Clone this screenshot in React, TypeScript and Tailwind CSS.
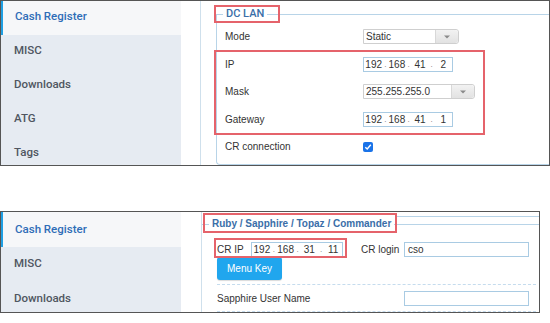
import React from "react";

const label = "font-['Liberation_Sans',Arial,sans-serif] text-[10px] text-[#333]";

function Sidebar({ items, itemH, pb }: { items: string[]; itemH: string; pb: string }) {
  return (
    <div className="w-[180px] shrink-0 h-full bg-[#e6ebf2] overflow-hidden font-['Roboto',sans-serif] text-[11.5px] font-medium">
      {items.map((t, i) =>
        i === 0 ? (
          <div key={t} className={`${itemH} ${pb} flex items-center bg-[#f6f7f9] border-l-2 border-[#1f9fe3] pl-[12px] text-[#2f6db7]`}>
            {t}
          </div>
        ) : (
          <div key={t} className={`${itemH} ${pb} flex items-center pl-[13px] text-[#4f5661]`}>
            {t}
          </div>
        )
      )}
    </div>
  );
}

function Caret() {
  return (
    <svg width="6" height="4" viewBox="0 0 6 4">
      <path d="M0 0.5 L6 0.5 L3 3.5 Z" fill="#8a8a8a" />
    </svg>
  );
}

function Select({ text, w }: { text: string; w: string }) {
  return (
    <div className={`${w} h-[15px] flex border border-[#cfcfcf] rounded-r-[3px] bg-white`}>
      <div className={`flex-1 flex items-center pl-[2px] ${label}`}>{text}</div>
      <div className="w-[23px] h-full flex items-center justify-center bg-gradient-to-b from-[#f2f2f2] to-[#e2e2e2] border-l border-[#d8d8d8] rounded-r-[3px]">
        <Caret />
      </div>
    </div>
  );
}

function IpInput({ parts, w }: { parts: string[]; w: string }) {
  return (
    <div className={`${w} h-[15px] flex items-center border border-[#a9cbe3] bg-white pl-[1px] ${label} text-[10.5px]`}>
      {parts.map((p, i) => (
        <React.Fragment key={i}>
          <span className="w-[18px] text-center">{p}</span>
          {i < 3 && <span className="w-[6px] text-center text-[#777] text-[8px] translate-y-[1px]">.</span>}
        </React.Fragment>
      ))}
    </div>
  );
}

function Row({ name, children }: { name: string; children: React.ReactNode }) {
  return (
    <div className="h-[27.5px] flex items-center pl-[8px]">
      <div className={`w-[138px] ${label}`}>{name}</div>
      {children}
    </div>
  );
}

function Check() {
  return (
    <div className="w-[10px] h-[10px] rounded-[2px] bg-[#1a73e8] flex items-center justify-center">
      <svg width="8" height="8" viewBox="0 0 8 8">
        <path d="M1.3 4.2 L3.2 6 L6.8 1.8" stroke="white" strokeWidth="1.4" fill="none" />
      </svg>
    </div>
  );
}

const redBox = "absolute border-2 border-[#e5636b] pointer-events-none";

export default function App() {
  return (
    <div className="w-[550px] h-[323px] bg-white overflow-hidden">
      {/* Top panel */}
      <div className="w-[550px] h-[166px] border border-[#555] flex overflow-hidden">
        <Sidebar items={["Cash Register", "MISC", "Downloads", "ATG", "Tags"]} itemH="h-[34px] shrink-0" pb="pb-[3px]" />
        <div className="w-[19px] shrink-0" />
        <div className="flex-1 h-full border-l border-[#cfe0ec] flex flex-col">
          <fieldset className="ml-[15px] mt-[6px] flex-1 border-l border-t border-b border-[#b8d4e8] rounded-bl-[4px] min-w-0">
            <legend className="relative ml-[6px] px-[3px] leading-[14px] font-['Roboto',sans-serif] font-medium text-[11px] text-[#3a6ea8]">
              DC LAN
              <div className={`${redBox} -left-[9px] -top-[2px] w-[66px] h-[18px]`} />
            </legend>
            <div className="pt-[2px]">
              <Row name="Mode">
                <Select text="Static" w="w-[96px]" />
              </Row>
              <div className="relative">
                <div className={`${redBox} -top-[1px] -left-[3px] w-[271px] -bottom-[2px]`} />
                <Row name="IP">
                  <IpInput parts={["192", "168", "41", "2"]} w="w-[90px]" />
                </Row>
                <Row name="Mask">
                  <Select text="255.255.255.0" w="w-[112px]" />
                </Row>
                <Row name="Gateway">
                  <IpInput parts={["192", "168", "41", "1"]} w="w-[90px]" />
                </Row>
              </div>
              <Row name="CR connection">
                <Check />
              </Row>
            </div>
          </fieldset>
        </div>
      </div>

      {/* Bottom panel */}
      <div className="mt-[45px] w-[540px] h-[102px] border border-[#555] flex overflow-hidden">
        <Sidebar items={["Cash Register", "MISC", "Downloads"]} itemH="h-[34.5px] shrink-0" pb="pb-0" />
        <div className="w-[20px] shrink-0" />
        <div className="flex-1 h-full border-l border-[#cfe0ec] flex flex-col min-w-0">
          <div className="mt-[4px] ml-[195px] h-px bg-[#b8d4e8] shrink-0" />
          <fieldset className="flex-1 border-t border-[#b8d4e8] min-w-0">
            <legend className="relative ml-[7px] px-[3px] leading-[14px] font-['Liberation_Sans',Arial,sans-serif] font-bold text-[10px] text-[#3a6ea8]">
              Ruby / Sapphire / Topaz / Commander
              <div className={`${redBox} -left-[6px] -top-[4px] w-[194px] h-[20px]`} />
            </legend>
            <div className="pl-[15px] pr-[3px]">
              <div className="pt-[10px] flex items-center h-[26px]">
                <div className="relative flex items-center">
                  <div className={`${redBox} -left-[3px] -top-[4px] w-[133px] h-[20px]`} />
                  <span className={`${label} w-[34px]`}>CR IP</span>
                  <IpInput parts={["192", "168", "31", "11"]} w="w-[92px]" />
                </div>
                <span className={`${label} ml-[18px] w-[43px]`}>CR login</span>
                <div className={`w-[125px] h-[15px] mt-[1px] border border-[#a9cbe3] bg-white flex items-center pl-[3px] ${label}`}>cso</div>
              </div>
              <button className="mt-0 w-[65px] h-[23px] rounded-[3px] bg-[#20a6ee] text-white font-['Liberation_Sans',Arial,sans-serif] text-[10px] flex items-center justify-center shadow-[0_1px_1px_rgba(0,0,0,0.15)]">
                Menu Key
              </button>
              <div className="mt-[4px] border-t border-dashed border-[#c5dcee]" />
              <div className="h-[26px] flex items-center">
                <span className={`${label} w-[187px]`}>Sapphire User Name</span>
                <div className="w-[125px] h-[15px] border border-[#a9cbe3] bg-white" />
              </div>
              <div className="border-t border-dashed border-[#c5dcee]" />
            </div>
          </fieldset>
        </div>
      </div>
    </div>
  );
}
